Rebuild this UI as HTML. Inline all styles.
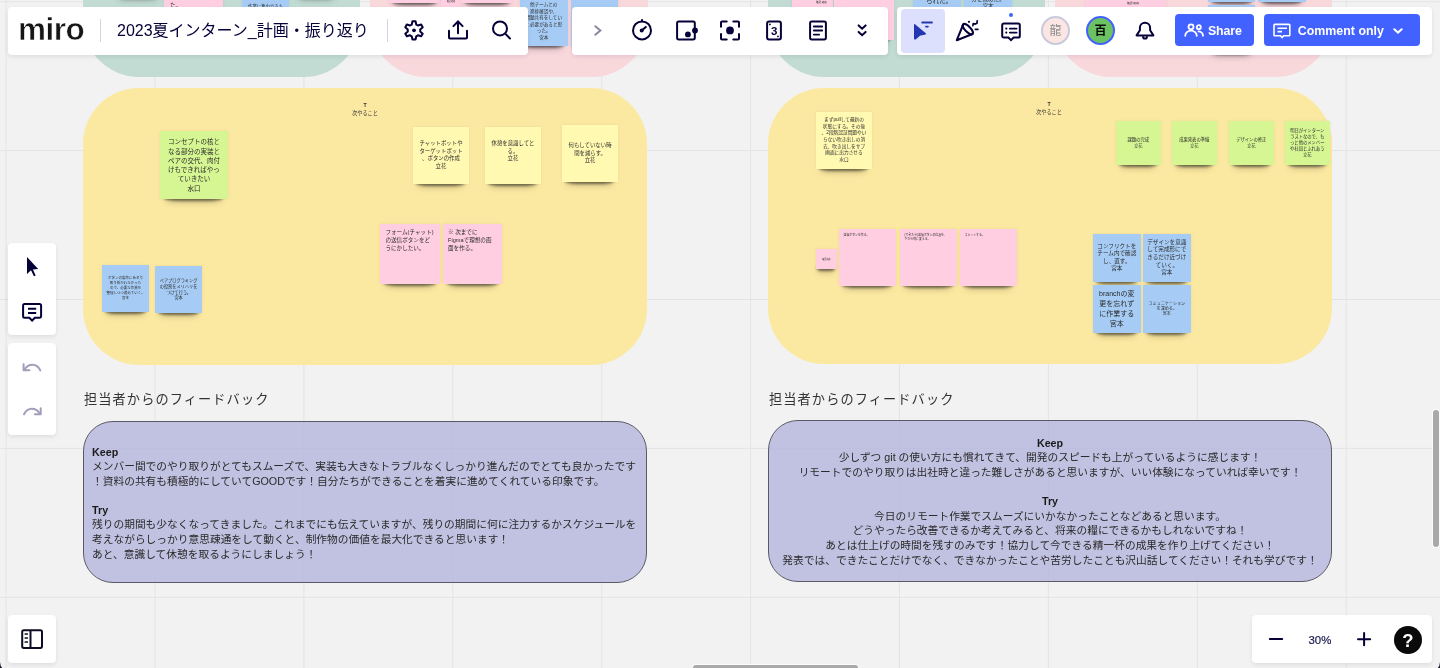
<!DOCTYPE html>
<html lang="ja">
<head>
<meta charset="utf-8">
<title>2023夏インターン_計画・振り返り - Miro</title>
<style>
*{box-sizing:border-box;margin:0;padding:0}
html,body{width:1440px;height:668px;overflow:hidden;background:#f2f2f2}
body{position:relative;font-family:"Liberation Sans","Noto Sans CJK JP",sans-serif;color:#050038}
.abs{position:absolute}
.st,.fb,.hdr,.title,.logo,.btn,.av,.lbl,.abs{will-change:transform}
#grid{position:absolute;left:0;top:0;width:1440px;height:668px}
.shape{position:absolute;border-radius:56px}
.panel{position:absolute;background:#fff;border-radius:4px;box-shadow:0 2px 4px rgba(5,0,56,.08),0 0 1px rgba(5,0,56,.04)}
.st{position:absolute;isolation:isolate;color:#2b2b2b;font-family:"Liberation Sans","Noto Sans CJK JP",sans-serif;text-align:center;white-space:nowrap;display:flex;flex-direction:column;justify-content:center;align-items:center}
.st::before{content:"";position:absolute;left:0;top:0;right:0;bottom:0;z-index:-1;background:var(--c);box-shadow:0 0 3px rgba(0,0,0,.08)}
.st::after{content:"";position:absolute;left:6%;right:7%;bottom:2px;height:6px;z-index:-2;box-shadow:0 4px 3px rgba(0,0,0,.52),0 6px 6px rgba(0,0,0,.18);border-radius:50%/100%}
.st.l{align-items:flex-start;justify-content:flex-start;text-align:left}
.yel{--c:#fff9b1}.grn{--c:#d5f692}.blu{--c:#a6ccf5}.pnk{--c:#ffcee0}
.lbl{position:absolute;font-size:5.2px;line-height:7.5px;color:#333;text-align:center;white-space:nowrap;transform:translateX(-50%)}
.ico{position:absolute}
.ico svg{display:block;overflow:visible}
.hdr{position:absolute;font-family:"Liberation Sans","Noto Sans CJK JP",sans-serif;font-size:13.200px;letter-spacing:1.100px;color:#333;white-space:nowrap;line-height:20px}
.fb{position:absolute;border:1px solid #5a5a66;border-radius:30px;background:rgba(180,180,220,.78);font-family:"Liberation Sans","Noto Sans CJK JP",sans-serif;color:#2a2a2a;font-size:10.720px;line-height:14.600px;white-space:nowrap}
.fb b{font-weight:700;color:#1a1a1a}

.ic{position:absolute;width:24px;height:24px;overflow:visible;fill:none;stroke:#050038;stroke-width:2;stroke-linecap:round;stroke-linejoin:round}
.dv{position:absolute;width:1px;background:#d5d4e2}
.logo{position:absolute;left:18.200px;top:10.600px;font-family:"Liberation Sans",sans-serif;font-weight:700;font-size:31.500px;line-height:36px;color:#161616;letter-spacing:-0.500px;-webkit-text-stroke:0.600px #fff;white-space:nowrap}
.title{position:absolute;left:117px;top:19.5px;font-size:16px;line-height:22px;color:#050038;white-space:nowrap}
.btn{position:absolute;top:14px;height:32px;border-radius:4px;background:#4262ff;color:#fff;font-weight:700;font-size:12.4px;white-space:nowrap}
.btn span{position:absolute;top:8.5px;line-height:16px}
.av{position:absolute;width:29px;height:29px;border-radius:50%;border:2.500px solid;font-family:"Liberation Sans","Noto Sans CJK JP",sans-serif;font-size:12px;line-height:27px;text-align:center}
</style>
</head>
<body>
<!-- grid -->
<svg id="grid" width="1440" height="668">
<g stroke="#e4e4e4" stroke-width="1" fill="none">
<path d="M6.1 0V668M155 0V668M303.9 0V668M452.8 0V668M601.7 0V668M750.6 0V668M899.5 0V668M1048.4 0V668M1197.3 0V668M1346.2 0V668"/>
<path d="M0 1.7H1440M0 150.6H1440M0 299.5H1440M0 448.4H1440M0 597.3H1440"/>
</g>
</svg>

<!-- big shapes -->
<div class="shape" style="left:83px;top:-200px;width:277px;height:277px;background:#c2dcd4"></div>
<div class="shape" style="left:370px;top:-200px;width:278px;height:277px;background:#f9d8dc"></div>
<div class="shape" style="left:768px;top:-200px;width:277px;height:277px;background:#c2dcd4"></div>
<div class="shape" style="left:1055px;top:-200px;width:277px;height:277px;background:#f9d8dc"></div>
<div class="shape" style="left:83px;top:88px;width:564px;height:276.500px;background:#fce9a1"></div>
<div class="shape" style="left:768px;top:88px;width:564px;height:276px;background:#fce9a1"></div>


<!-- top row partial stickies -->
<div class="st pnk" style="left:164px;top:-50px;width:59.3px;height:59.3px"></div>
<div class="abs" style="left:169.500px;top:0.500px;font-size:5.600px;line-height:8px;color:#2b2b2b">た。</div>
<div class="st blu" style="left:242.200px;top:-40px;width:47.300px;height:47.300px"></div>
<div class="abs" style="left:248px;top:4.300px;font-size:4.400px;line-height:6px;color:#2b2b2b">作業に集中できた。</div>
<div class="st grn" style="left:114px;top:-59.500px;width:48px;height:56px"></div>
<div class="st grn" style="left:294px;top:-59.500px;width:44px;height:56px"></div>
<div class="st pnk" style="left:389px;top:-54px;width:52px;height:56.5px"></div>
<div class="st pnk" style="left:441px;top:-9px;width:20px;height:20px;font-size:2px;line-height:3px;justify-content:flex-start;padding-top:8.600px">確認 終終</div>
<div class="st pnk" style="left:461px;top:-54px;width:52.3px;height:56.5px"></div>
<div class="st blu" style="left:520px;top:-1.7px;width:47.5px;height:47.5px;font-size:4.6px;line-height:6.5px;justify-content:flex-start;padding-top:4.400px">他チームとの<br>進捗確認や、<br>問題共有をしてい<br>く必要があると思<br>った。<br>宮本</div>
<div class="st blu" style="left:570.7px;top:-1.5px;width:47.2px;height:47.5px"></div>
<div class="st pnk" style="left:791.600px;top:-30px;width:41.400px;height:41.400px"></div>
<div class="abs" style="left:815.500px;top:1.300px;font-size:2.500px;line-height:3.500px;color:#2b2b2b">確認 終終</div>
<div class="st pnk" style="left:833.5px;top:-20px;width:60.2px;height:60.2px"></div>
<div class="st blu" style="left:913.3px;top:-40px;width:48.3px;height:47.3px"></div>
<div class="abs" style="left:926px;top:-4px;font-size:6.6px;line-height:9px;color:#2b2b2b">られた。</div>
<div class="st blu" style="left:963.800px;top:-40px;width:48px;height:47.300px"></div>
<div class="abs" style="left:963.800px;top:-4.300px;width:48px;text-align:center;font-size:5.600px;line-height:7.200px;color:#2b2b2b">分を進めた。<br>宮本</div>
<div class="st pnk" style="left:1085.600px;top:-70px;width:80.400px;height:80.400px"></div>
<div class="abs" style="left:1126.500px;top:1.800px;font-size:2.800px;line-height:3.500px;color:#2b2b2b">確認 終終</div>
<div class="st blu" style="left:1207.8px;top:-46.5px;width:47.2px;height:47.5px"></div>
<div class="st blu" style="left:1257.8px;top:-46.5px;width:47.7px;height:47.5px"></div>
<div class="st blu" style="left:1207.8px;top:5px;width:47.2px;height:47.5px"></div>

<!-- left frame -->
<div class="lbl" style="left:364.700px;top:102.300px"><b style="font-size:5.200px">T</b><br>次やること</div>
<div class="st grn" style="left:159.6px;top:130.7px;width:67.8px;height:68.3px;font-size:6.5px;line-height:9.3px">コンセプトの核と<br>なる部分の実装と<br>ペアの交代、肉付<br>けもできればやっ<br>ていきたい<br>水口</div>
<div class="st yel" style="left:412.7px;top:127.1px;width:56px;height:56.6px;font-size:5.4px;line-height:7.6px">チャットボットや<br>ターゲットボット<br>、ボタンの作成<br>立花</div>
<div class="st yel" style="left:485px;top:127.1px;width:56px;height:56.6px;font-size:5.4px;line-height:7.6px;justify-content:flex-start;padding-top:13px">休憩を意識してと<br>る。<br>立花</div>
<div class="st yel" style="left:561.7px;top:125.2px;width:56.1px;height:57px;font-size:5.4px;line-height:7.6px">何もしていない時<br>間を減らす。<br>立花</div>
<div class="st pnk l" style="left:379.5px;top:223.6px;width:59.7px;height:59.7px;font-size:5.6px;line-height:8.1px;padding:4px 0 0 5.4px">フォーム(チャット)<br>の送信ボタンをど<br>うにかしたい。</div>
<div class="st pnk l" style="left:443.2px;top:223.6px;width:59.3px;height:59.7px;font-size:5.6px;line-height:8.1px;padding:4px 0 0 5px">※ 次までに<br>Figmaで理想の画<br>面を作る。</div>
<div class="st blu" style="left:102px;top:265px;width:47.2px;height:47.2px;font-size:3.5px;line-height:5.03px">ボタンの製作にあまり<br>取り掛かれなかった<br>ので、必要な作業を<br>整理しつつ進めていく。<br>宮本</div>
<div class="st blu" style="left:155.3px;top:265.5px;width:47.2px;height:47.4px;font-size:4.2px;line-height:5.75px">ペアプログラミング<br>の役割をメリハリを<br>つけて行う。<br>宮本</div>

<!-- right frame -->
<div class="lbl" style="left:1049.100px;top:101.300px"><b style="font-size:5.200px">T</b><br>次やること</div>
<div class="st yel" style="left:816px;top:112.3px;width:56px;height:56.6px;font-size:4.7px;line-height:6.6px">まずpullして最新の<br>状態にする。その後<br>、2段階認証問題やい<br>らない吹き出しの消<br>去、吹き出しをサブ<br>画面に出力させる<br>水口</div>
<div class="st pnk" style="left:816.4px;top:249.2px;width:20.6px;height:20.2px;font-size:2px;line-height:3px">確認 終終</div>
<div class="st pnk l" style="left:839.3px;top:229px;width:56.6px;height:56.6px;font-size:2.9px;line-height:4.1px;padding:3.8px 0 0 4.5px">送信ボタンを作る。</div>
<div class="st pnk l" style="left:899.5px;top:229px;width:56.5px;height:56.6px;font-size:2.9px;line-height:4.1px;padding:3.8px 0 0 4.5px">(できたら)送信ボタンの位置を、<br>下から側に変える。</div>
<div class="st pnk l" style="left:959.6px;top:229px;width:56.6px;height:56.6px;font-size:2.9px;line-height:4.1px;padding:3.8px 0 0 4.5px">コミットする。</div>
<div class="st grn" style="left:1116.4px;top:121px;width:44.500px;height:44px;font-size:4.3px;line-height:5.9px">課題の完成<br>立花</div>
<div class="st grn" style="left:1172px;top:121px;width:44.500px;height:44px;font-size:4.3px;line-height:5.9px">成果発表の準備<br>立花</div>
<div class="st grn" style="left:1228.6px;top:121px;width:44.500px;height:44px;font-size:4.3px;line-height:5.9px">デザインの修正<br>立花</div>
<div class="st grn" style="left:1284.7px;top:121px;width:44.500px;height:44px;font-size:4.3px;line-height:5.9px">明日がインターン<br>ラストなので、も<br>っと他のメンバー<br>や社員とふれあう<br>立花</div>
<div class="st blu" style="left:1092.6px;top:234px;width:47.6px;height:47.5px;font-size:5.6px;line-height:7.6px">コンフリクトを<br>チーム内で確認<br>し、直す。<br>宮本</div>
<div class="st blu" style="left:1143.4px;top:234px;width:47.6px;height:47.5px;font-size:5.6px;line-height:7.6px">デザインを意識<br>して完成形にで<br>きるだけ近づけ<br>ていく。<br>宮本</div>
<div class="st blu" style="left:1092.6px;top:284.7px;width:47.6px;height:47.5px;font-size:7px;line-height:9.9px">branchの変<br>更を忘れず<br>に作業する<br>宮本</div>
<div class="st blu" style="left:1143.4px;top:284.7px;width:47.6px;height:47.5px;font-size:4.1px;line-height:5.4px">コミュニケーション<br>を深める。<br>宮本</div>

<!-- feedback -->
<div class="hdr" style="left:83.800px;top:390px">担当者からのフィードバック</div>
<div class="hdr" style="left:768.800px;top:390px">担当者からのフィードバック</div>
<div class="fb" style="left:83px;top:420.500px;width:564px;height:162px;padding:22.500px 0 0 8px"><b>Keep</b><br>メンバー間でのやり取りがとてもスムーズで、実装も大きなトラブルなくしっかり進んだのでとても良かったです<br>！資料の共有も積極的にしていてGOODです！自分たちができることを着実に進めてくれている印象です。<br><br><b>Try</b><br>残りの期間も少なくなってきました。これまでにも伝えていますが、残りの期間に何に注力するかスケジュールを<br>考えながらしっかり意思疎通をして動くと、制作物の価値を最大化できると思います！<br>あと、意識して休憩を取るようにしましょう！</div>
<div class="fb" style="left:768px;top:420px;width:564px;height:162px;padding:14.800px 0 0 0;text-align:center"><b>Keep</b><br>少しずつ git の使い方にも慣れてきて、開発のスピードも上がっているように感じます！<br>リモートでのやり取りは出社時と違った難しさがあると思いますが、いい体験になっていれば幸いです！<br><br><b>Try</b><br>今日のリモート作業でスムーズにいかなかったことなどあると思います。<br>どうやったら改善できるか考えてみると、将来の糧にできるかもしれないですね！<br>あとは仕上げの時間を残すのみです！協力して今できる精一杯の成果を作り上げてください！<br>発表では、できたことだけでなく、できなかったことや苦労したことも沢山話してください！それも学びです！</div>


<!-- TOP-PANELS -->
<div class="panel" style="left:8px;top:7px;width:520px;height:48px"></div>
<div class="panel" style="left:572px;top:7px;width:316px;height:48px"></div>
<div class="panel" style="left:897px;top:7px;width:535px;height:48px"></div>
<div class="logo">miro</div>
<div class="dv" style="left:100px;top:19px;height:23px"></div>
<div class="title">2023夏インターン_計画・振り返り</div>
<div class="dv" style="left:387px;top:19px;height:23px"></div>
<!-- gear -->
<svg class="ic" style="left:402.1px;top:18.1px" viewBox="0 0 24 24"><path d="M14.26 6.52 L13.53 3.23 L10.47 3.23 L9.74 6.52 L8.04 7.50 L4.82 6.48 L3.29 9.14 L5.78 11.41 L5.78 13.39 L3.29 15.66 L4.82 18.32 L8.04 17.30 L9.74 18.28 L10.47 21.57 L13.53 21.57 L14.26 18.28 L15.96 17.30 L19.18 18.32 L20.71 15.66 L18.22 13.39 L18.22 11.41 L20.71 9.14 L19.18 6.48 L15.96 7.50Z"/><circle cx="12" cy="12.3" r="1.9" fill="#050038" stroke="none"/></svg>
<!-- export -->
<svg class="ic" style="left:446px;top:18px" viewBox="0 0 24 24" stroke-linecap="butt"><path d="M3 12.8V19.4a1 1 0 0 0 1 1H20a1 1 0 0 0 1-1V12.8"/><path d="M12 15.2V4.2"/><path d="M7.4 8.1L12 3.5L16.6 8.1" stroke-linejoin="miter"/></svg>
<!-- search -->
<svg class="ic" style="left:488px;top:18px" viewBox="0 0 24 24"><circle cx="12" cy="10.4" r="7"/><path d="M17.2 15.6L22 20.5"/></svg>
<!-- chevron -->
<svg class="ic" style="left:586px;top:18px;stroke:#8a87a4" viewBox="0 0 24 24" stroke-linecap="butt"><path d="M9.3 8.2L14.4 12.4L9.3 16.8" stroke-linejoin="miter"/></svg>
<!-- timer -->
<svg class="ic" style="left:630px;top:18px" viewBox="0 0 24 24"><circle cx="12" cy="12.4" r="9"/><path d="M12 1.2V3.4" stroke-linecap="butt"/><circle cx="11.7" cy="12.6" r="2" fill="#050038" stroke="none"/><path d="M11.7 12.6L15.8 8.9"/></svg>
<!-- voting -->
<svg class="ic" style="left:674px;top:18px" viewBox="0 0 24 24"><rect x="3.1" y="3.4" width="17.7" height="18" rx="1.6"/><circle cx="13.9" cy="16.4" r="2.9" fill="#050038" stroke="none"/><circle cx="21" cy="12.5" r="2.9" fill="#050038" stroke="none"/></svg>
<!-- focus -->
<svg class="ic" style="left:718px;top:18px" viewBox="0 0 24 24" stroke-linecap="butt"><path d="M3 8.8V4.4a1 1 0 0 1 1-1H8.7M15.3 3.4H20a1 1 0 0 1 1 1V8.8M21 16V20.4a1 1 0 0 1-1 1H15.3M8.7 21.4H4a1 1 0 0 1-1-1V16"/><circle cx="12" cy="12.4" r="3.9" fill="#050038" stroke="none"/></svg>
<!-- card -->
<svg class="ic" style="left:762px;top:18px" viewBox="0 0 24 24"><rect x="5.1" y="3.4" width="13.8" height="18" rx="2"/><circle cx="7.9" cy="6.4" r="0.9" fill="#050038" stroke="none"/><circle cx="16" cy="18.4" r="0.9" fill="#050038" stroke="none"/><text x="12.1" y="17.3" text-anchor="middle" font-family="Liberation Sans, sans-serif" font-weight="700" font-size="11.5" fill="#050038" stroke="none">3</text></svg>
<!-- notes -->
<svg class="ic" style="left:806px;top:18px" viewBox="0 0 24 24"><rect x="4.1" y="3.4" width="15.8" height="18" rx="1.6"/><path d="M7.8 8.5H16.2M7.8 12.5H16.2M7.8 16.6H13.2" stroke-width="1.8"/></svg>
<!-- more -->
<svg class="ic" style="left:850px;top:18px" viewBox="0 0 24 24" stroke-linecap="butt" stroke-width="2.2"><path d="M8.6 7.4L12.1 10.7L15.600 7.400M8.600 13.900L12.100 17.200L15.600 13.900" stroke-linejoin="miter"/></svg>
<!-- selected cursor button -->
<div class="abs" style="left:901px;top:9px;width:44px;height:43.5px;border-radius:4px;background:#dde0fd"></div>
<svg class="ic" style="left:911px;top:18px;stroke:#2436b1" viewBox="0 0 24 24"><path d="M3.6 6.6L14.4 15.8L8.6 17.2L4.3 21L3.6 20.8Z" fill="#2436b1" stroke-width="1.2"/><path d="M11.2 4.5H21M15 8.55H16.9" stroke-width="1.8"/></svg>
<!-- party -->
<svg class="ic" style="left:955px;top:18px" viewBox="0 0 24 24" stroke-width="1.9"><path d="M8.2 6.5L1.8 22.2L17.6 16"/><ellipse cx="12.8" cy="11.1" rx="6.7" ry="2.7" transform="rotate(45 12.8 11.1)"/><circle cx="14" cy="3.8" r="1.1" fill="#050038" stroke="none"/><path d="M17.9 7.6L18.3 5.5L20.3 6.1L22 5.3L22.2 2.9" stroke-width="1.7"/><path d="M20.4 11.3H22.9" stroke-width="1.7"/></svg>
<!-- comments -->
<svg class="ic" style="left:999px;top:18px" viewBox="0 0 24 24"><path d="M4.8 5.6H19.2a1.6 1.6 0 0 1 1.6 1.6V18a1.6 1.6 0 0 1-1.6 1.6H14.6L12 22.2L9.4 19.600H4.8a1.600 1.600 0 0 1-1.600-1.600V7.200a1.600 1.600 0 0 1 1.600-1.600Z" stroke-linejoin="miter"/><path d="M10.800 10.600H17.600M10.800 14.600H17.600" stroke-width="1.8"/><circle cx="7.300" cy="10.600" r="1.100" fill="#050038" stroke="none"/><circle cx="7.300" cy="14.600" r="1.100" fill="#050038" stroke="none"/></svg>
<div class="abs" style="left:1008.900px;top:13.300px;width:4.200px;height:4.200px;border-radius:50%;background:#4262ff"></div>
<!-- avatars -->
<div class="av" style="left:1040.900px;top:16px;border-color:#c9c9dd;background:#fbe6e4;color:#8c8c8c">龍</div>
<div class="av" style="left:1086.100px;top:16px;border-color:#4262ff;background:#6cc263;color:#0a0a0a;font-weight:700">百</div>
<!-- bell -->
<svg class="ic" style="left:1133px;top:18px" viewBox="0 0 24 24" stroke-linejoin="miter"><path d="M3.600 17.400L6.900 12.200V9.800a5.100 5.100 0 0 1 10.200 0V12.200L20.400 17.400Z"/><path d="M10.100 18.200v.500a1.900 1.900 0 0 0 3.800 0v-.500" stroke-linecap="butt"/></svg>
<!-- share -->
<div class="btn" style="left:1175px;width:78.500px"><svg class="ic" style="left:8px;top:4px;stroke:#fff;stroke-width:1.800" viewBox="0 0 24 24"><circle cx="8" cy="8.800" r="2.500"/><path d="M2.200 17.800a5.800 5.200 0 0 1 11.600 0"/><circle cx="15.800" cy="9.200" r="2"/><path d="M15.500 13.400a4.400 4.400 0 0 1 4.500 4.400"/></svg><span style="left:33px;letter-spacing:-0.150px">Share</span></div>
<!-- comment only -->
<div class="btn" style="left:1263.700px;width:156.300px"><svg class="ic" style="left:5.800px;top:4px;stroke:#fff;stroke-width:1.600" viewBox="0 0 24 24"><path d="M4.800 6.400H19a.800.800 0 0 1 .800.800V17a.800.800 0 0 1-.800.800H13.700L12.100 19.600L10.500 17.800H4.800a.800.800 0 0 1-.800-.800V7.200a.800.800 0 0 1 .800-.800Z" stroke-linejoin="miter"/><path d="M7.500 10.200H17M7.500 13.600H12" stroke-linecap="butt"/></svg><span style="left:33.800px">Comment only</span><svg class="ic" style="left:121.500px;top:5.400px;stroke:#fff;stroke-width:2" viewBox="0 0 24 24" stroke-linecap="butt"><path d="M8.300 10.200L12 13.600L15.700 10.200" stroke-linejoin="miter"/></svg></div>

<!-- LEFT-PANELS -->
<div class="panel" style="left:8px;top:243px;width:48px;height:92px"></div>
<div class="panel" style="left:8px;top:343px;width:48px;height:91.500px"></div>
<div class="panel" style="left:8px;top:615.300px;width:48px;height:48px"></div>
<div class="panel" style="left:1252px;top:615.300px;width:180px;height:48px"></div>
<!-- cursor -->
<svg class="ic" style="left:20px;top:255px" viewBox="0 0 24 24"><path d="M7 2.100V18.900L11 15.300L13.900 21.300L15.700 20.400L12.900 14.600L18.200 13.900Z" fill="#050038" stroke="none"/></svg>
<!-- comment -->
<svg class="ic" style="left:20px;top:299px" viewBox="0 0 24 24"><path d="M4.600 5.100H19.600a1.500 1.500 0 0 1 1.500 1.500V17.200a1.500 1.500 0 0 1-1.500 1.500H14.900L12.100 21.500L9.300 18.700H4.600a1.500 1.500 0 0 1-1.500-1.500V6.600a1.500 1.500 0 0 1 1.500-1.500Z" stroke-linejoin="miter"/><path d="M8 9.800H16.200M8 14H16.200" stroke-linecap="butt"/></svg>
<!-- undo -->
<svg class="ic" style="left:20px;top:355px;stroke:#a19dbb" viewBox="0 0 24 24" stroke-linecap="butt" stroke-linejoin="miter"><path d="M3.600 9.200V15.300H9.400"/><path d="M4.400 14.600C8.500 8.600 16.500 7.600 20.300 15.400"/></svg>
<!-- redo -->
<svg class="ic" style="left:20px;top:399px;stroke:#a19dbb" viewBox="0 0 24 24" stroke-linecap="butt" stroke-linejoin="miter"><path d="M20.700 9.200V15.200H14.900"/><path d="M19.900 14.500C15.800 8.500 7.800 7.500 4 15.300"/></svg>
<!-- frames panel icon -->
<svg class="ic" style="left:20px;top:627.300px;stroke:#0c0c24" viewBox="0 0 24 24"><rect x="2.200" y="3.200" width="19.800" height="17.700" rx="1.600"/><path d="M10.500 3.200V20.900" stroke-linecap="butt"/><path d="M5.300 7H7.300M5.300 11H7.300M5.300 15H7.300" stroke-width="1.700"/></svg>
<!-- zoom controls -->
<svg class="ic" style="left:1264px;top:627.300px" viewBox="0 0 24 24" stroke-linecap="butt"><path d="M5.800 12H18.200"/></svg>
<div class="abs" style="left:1300px;top:632px;width:40px;text-align:center;font-size:11.400px;line-height:16px;color:#1a1a4e;letter-spacing:0.100px;-webkit-text-stroke:0.200px #1a1a4e">30%</div>
<svg class="ic" style="left:1352px;top:627.300px" viewBox="0 0 24 24" stroke-linecap="butt"><path d="M6 12.200H18.200M12.100 6.100V18.300"/></svg>
<div class="abs" style="left:1393.800px;top:625.600px;width:28px;height:28px;border-radius:50%;background:#0a0a0a;color:#fff;text-align:center;font-weight:700;font-size:18.500px;line-height:29px">?</div>

<!-- scrollbars -->
<div class="abs" style="left:1433px;top:410px;width:6px;height:137px;border-radius:3px;background:#a9a9a9;box-shadow:0 0 0 1px rgba(255,255,255,.7)"></div>
<div class="abs" style="left:693px;top:664.5px;width:165px;height:8px;border-radius:3px;background:#a9a9a9;box-shadow:0 0 0 1px rgba(255,255,255,.7)"></div>
<!-- window corners -->
<svg class="abs" style="left:0;top:662px" width="10" height="10"><path d="M0 0V10H10A10 10 0 0 1 0 0Z" fill="#15152e"/></svg>
<svg class="abs" style="left:1430px;top:662px" width="10" height="10"><path d="M10 0V10H0A10 10 0 0 0 10 0Z" fill="#15152e"/></svg>
</body>
</html>
